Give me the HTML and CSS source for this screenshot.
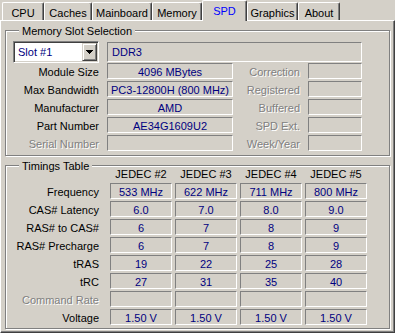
FILE: index.html
```html
<!DOCTYPE html>
<html lang="en">
<head>
    <meta charset="UTF-8">
    <meta name="viewport" content="width=device-width, initial-scale=1.0">
    <title>CPU-Z SPD</title>
    <link rel="stylesheet" href="styles.css">
</head>
<body>
    <div class="window">
        <div class="tabs">
            <div class="tab tab-cpu">CPU</div>
            <div class="tab tab-caches">Caches</div>
            <div class="tab tab-mainboard">Mainboard</div>
            <div class="tab tab-memory">Memory</div>
            <div class="tab tab-spd active">SPD</div>
            <div class="tab tab-graphics">Graphics</div>
            <div class="tab tab-about">About</div>
        </div>

        <div class="panel">
            <!-- Memory slot selection -->
            <div class="group slot-group">
                <div class="group-title">Memory Slot Selection</div>
                <div class="slot-grid">
                    <div class="combo">
                        <span class="combo-text">Slot #1</span>
                        <span class="combo-btn">
                            <svg width="7" height="4" viewBox="0 0 7 4">
                                <rect x="0" y="0" width="7" height="1" fill="#000"/>
                                <rect x="1" y="1" width="5" height="1" fill="#000"/>
                                <rect x="2" y="2" width="3" height="1" fill="#000"/>
                                <rect x="3" y="3" width="1" height="1" fill="#000"/>
                            </svg>
                        </span>
                    </div>
                    <div class="field field-type">DDR3</div>

                    <div class="label">Module Size</div>
                    <div class="field">4096 MBytes</div>
                    <div class="label disabled">Correction</div>
                    <div class="field"></div>

                    <div class="label">Max Bandwidth</div>
                    <div class="field">PC3-12800H (800 MHz)</div>
                    <div class="label disabled">Registered</div>
                    <div class="field"></div>

                    <div class="label">Manufacturer</div>
                    <div class="field">AMD</div>
                    <div class="label disabled">Buffered</div>
                    <div class="field"></div>

                    <div class="label">Part Number</div>
                    <div class="field">AE34G1609U2</div>
                    <div class="label disabled">SPD Ext.</div>
                    <div class="field"></div>

                    <div class="label disabled">Serial Number</div>
                    <div class="field"></div>
                    <div class="label disabled">Week/Year</div>
                    <div class="field"></div>
                </div>
            </div>

            <!-- Timings table -->
            <div class="group timing-group">
                <div class="group-title">Timings Table</div>
                <div class="timing-grid">
                    <div></div>
                    <div class="col-head">JEDEC #2</div>
                    <div class="col-head">JEDEC #3</div>
                    <div class="col-head">JEDEC #4</div>
                    <div class="col-head">JEDEC #5</div>

                    <div class="label">Frequency</div>
                    <div class="field">533 MHz</div>
                    <div class="field">622 MHz</div>
                    <div class="field">711 MHz</div>
                    <div class="field">800 MHz</div>

                    <div class="label">CAS# Latency</div>
                    <div class="field">6.0</div>
                    <div class="field">7.0</div>
                    <div class="field">8.0</div>
                    <div class="field">9.0</div>

                    <div class="label">RAS# to CAS#</div>
                    <div class="field">6</div>
                    <div class="field">7</div>
                    <div class="field">8</div>
                    <div class="field">9</div>

                    <div class="label">RAS# Precharge</div>
                    <div class="field">6</div>
                    <div class="field">7</div>
                    <div class="field">8</div>
                    <div class="field">9</div>

                    <div class="label">tRAS</div>
                    <div class="field">19</div>
                    <div class="field">22</div>
                    <div class="field">25</div>
                    <div class="field">28</div>

                    <div class="label">tRC</div>
                    <div class="field">27</div>
                    <div class="field">31</div>
                    <div class="field">35</div>
                    <div class="field">40</div>

                    <div class="label disabled">Command Rate</div>
                    <div class="field"></div>
                    <div class="field"></div>
                    <div class="field"></div>
                    <div class="field"></div>

                    <div class="label">Voltage</div>
                    <div class="field">1.50 V</div>
                    <div class="field">1.50 V</div>
                    <div class="field">1.50 V</div>
                    <div class="field">1.50 V</div>
                </div>
            </div>
        </div>
    </div>
</body>
</html>
```

FILE: styles.css
```css
body {
    margin: 0;
    padding: 0;
    background-color: #d4d0c8;
    font-family: "Liberation Sans", Arial, sans-serif;
    font-size: 11px;
    color: #000;
}

.window {
    width: 395px;
    height: 333px;
    overflow: hidden;
}

/* Tab strip */
.tabs {
    display: flex;
    align-items: flex-end;
    height: 20px;
    padding-left: 2px;
}

.tab {
    box-sizing: border-box;
    height: 18px;
    padding-top: 4px;
    line-height: 12px;
    text-align: center;
    border-top: 1px solid #fff;
    border-left: 1px solid #fff;
    border-right: 1px solid #404040;
    border-radius: 2px 2px 0 0;
    box-shadow: inset -1px 0 #808080;
    white-space: nowrap;
}

.tab.active {
    position: relative;
    z-index: 1;
    height: 21px;
    margin-bottom: -1px;
    background-color: #d4d0c8;
    color: #0000ff;
}

.tab-cpu { width: 42px; }
.tab-caches { width: 48px; }
.tab-mainboard { width: 60px; }
.tab-memory { width: 50px; }
.tab-spd { width: 45px; }
.tab-graphics { width: 51px; }
.tab-about { width: 42px; }

/* Page panel */
.panel {
    box-sizing: border-box;
    width: 395px;
    padding: 9px 0 3px 4px;
    border-top: 1px solid #fff;
    border-left: 1px solid #fff;
    border-right: 1px solid #404040;
    border-bottom: 1px solid #404040;
    box-shadow: inset -1px -1px #808080;
}

/* Etched group boxes */
.group {
    width: 385px;
    box-sizing: border-box;
    border: 1px solid #808080;
    box-shadow: inset 1px 1px #fff, 1px 1px #fff;
    padding-left: 7px;
}

.group-title {
    display: table;
    margin: -6px 0 0 6px;
    padding: 0 3px;
    line-height: 13px;
    background-color: #d4d0c8;
}

.slot-group {
    padding-bottom: 4px;
}

.timing-group {
    margin-top: 9px;
    padding-bottom: 3px;
}

.timing-group .group-title {
    margin-bottom: -5px;
}

/* Grids */
.slot-grid {
    display: grid;
    grid-template-columns: 94px 126px 75px 54px;
    grid-template-rows: 20px repeat(5, 16px);
    row-gap: 2px;
    margin-top: 3px;
}

.timing-grid {
    display: grid;
    grid-template-columns: 94px repeat(4, 62px);
    grid-template-rows: 13px repeat(8, 16px);
    column-gap: 3px;
    row-gap: 2px;
}

.label {
    padding-right: 8px;
    text-align: right;
    line-height: 18px;
    white-space: nowrap;
}

.label.disabled {
    color: #808080;
    text-shadow: 1px 1px 0 #fff;
}

.col-head {
    text-align: center;
    line-height: 13px;
}

/* Sunken value boxes */
.field {
    box-sizing: border-box;
    height: 16px;
    line-height: 16px;
    text-align: center;
    color: #000080;
    border-top: 1px solid #808080;
    border-left: 1px solid #808080;
    border-right: 1px solid #fff;
    border-bottom: 1px solid #fff;
    white-space: nowrap;
}

.field-type {
    grid-column: 2 / 5;
    height: 20px;
    margin-top: 1px;
    padding-left: 4px;
    line-height: 18px;
    text-align: left;
}

/* Slot combo box */
.combo {
    box-sizing: border-box;
    display: flex;
    width: 86px;
    height: 22px;
    border-top: 1px solid #808080;
    border-left: 1px solid #808080;
    border-right: 1px solid #fff;
    border-bottom: 1px solid #fff;
    box-shadow: inset 1px 1px #404040, inset -1px -1px #d4d0c8;
    padding: 1px;
}

.combo-text {
    flex: 1;
    padding-left: 3px;
    line-height: 18px;
    background-color: #fff;
    color: #000080;
}

.combo-btn {
    box-sizing: border-box;
    display: flex;
    align-items: center;
    justify-content: center;
    width: 15px;
    height: 18px;
    background-color: #d4d0c8;
    border: 1px solid;
    border-color: #d4d0c8 #404040 #404040 #d4d0c8;
    box-shadow: inset 1px 1px #fff, inset -1px -1px #808080;
}

.combo-btn svg {
    display: block;
}
```
